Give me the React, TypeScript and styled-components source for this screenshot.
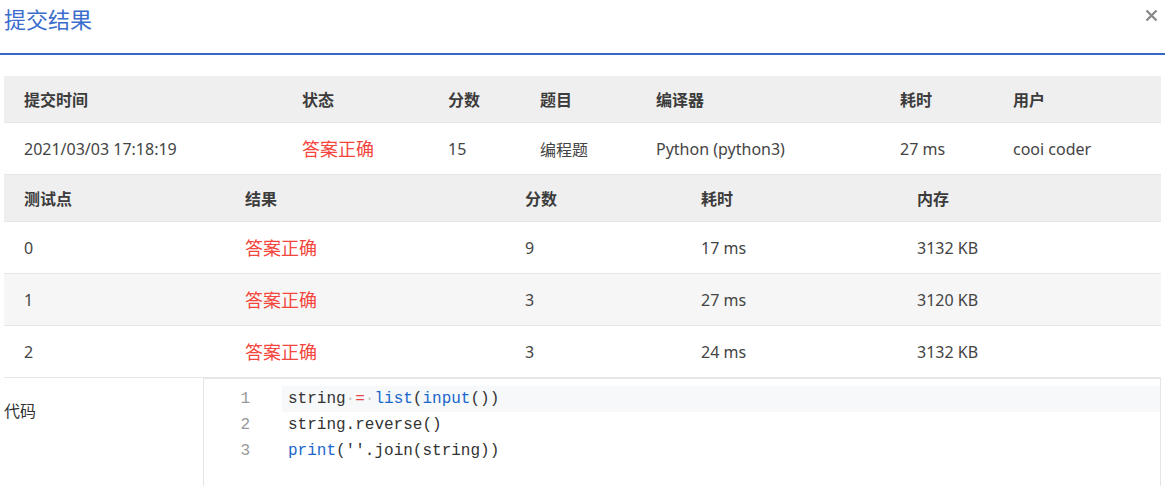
import React, { FC } from 'react'
import styled, { createGlobalStyle } from 'styled-components'

const GlobalStyle = createGlobalStyle`
  body {
    margin: 0;
    background: #fff;
    font-family: 'Segoe UI', 'Noto Sans', 'Noto Sans CJK SC', sans-serif;
    color: #333;
  }
`

const Modal = styled.div`
  width: 1165px;
  height: 486px;
  overflow: hidden;
`

const Header = styled.div`
  display: flex;
  justify-content: space-between;
  align-items: flex-start;
  height: 53px;
  padding: 0 7px 0 4px;
  border-bottom: 2px solid #3568c8;
  box-sizing: content-box;
`

const Title = styled.div`
  font-family: 'Noto Sans CJK SC', sans-serif;
  font-size: 22px;
  line-height: 36px;
  color: #3a6dcc;
`

const Close = styled.button`
  display: flex;
  margin-top: 9px;
  padding: 0;
  border: none;
  background: none;
  color: #8a8a8a;
  cursor: pointer;
`

const Body = styled.div`
  padding: 21px 4px 0;
`

const Row = styled.div<{ $cols: string; $head?: boolean; $shade?: boolean }>`
  display: grid;
  grid-template-columns: ${(p) => p.$cols};
  align-items: center;
  height: ${(p) => (p.$head ? 46 : 51)}px;
  border-bottom: 1px solid #e6e6e6;
  background: ${(p) => (p.$head ? '#efefef' : p.$shade ? '#f6f6f6' : '#fff')};
  font-family: ${(p) =>
    p.$head ? "'Noto Sans CJK SC', sans-serif" : "'Segoe UI', 'Noto Sans', 'Noto Sans CJK SC', sans-serif"};
  font-weight: ${(p) => (p.$head ? 700 : 400)};
  font-size: 16px;
  line-height: 20px;
  color: ${(p) => (p.$head ? '#3c3c3c' : '#444')};
`

const Cell = styled.div<{ $ok?: boolean; $cjk?: boolean }>`
  padding-left: 20px;
  white-space: nowrap;
  color: ${(p) => (p.$ok ? '#f4463c' : 'inherit')};
  font-family: ${(p) => (p.$ok || p.$cjk ? "'Noto Sans CJK SC', sans-serif" : 'inherit')};
  font-size: ${(p) => (p.$ok ? 18 : 16)}px;
  margin-top: ${(p) => (p.$ok ? -2 : 0)}px;
`

const CodeRow = styled.div`
  display: flex;
  height: 109px;
`

const CodeLabel = styled.div`
  width: 199px;
  padding-top: 20px;
  font-family: 'Noto Sans CJK SC', sans-serif;
  font-size: 16px;
  color: #333;
`

const Editor = styled.div`
  flex: 1;
  padding-top: 7px;
  border-left: 1px solid #e4e4e4;
  border-right: 1px solid #e4e4e4;
  border-top: 1px solid #e6e6e6;
  font-family: 'Liberation Mono', 'DejaVu Sans Mono', monospace;
  font-size: 16px;
`

const Line = styled.div`
  display: flex;
  height: 26px;
  line-height: 26px;
`

const Gutter = styled.div`
  width: 46px;
  padding-right: 32px;
  text-align: right;
  color: #999;
`

const Code = styled.div<{ $active?: boolean }>`
  flex: 1;
  padding-left: 6px;
  background: ${(p) => (p.$active ? '#f7f8fa' : 'transparent')};
  color: #333;
  white-space: pre;
`

const Fn = styled.span`
  color: #1a67cc;
`

const Op = styled.span`
  color: #e0474b;
`

const Dot = styled.span`
  color: #c8c8c8;
`

const topCols = '278px 146px 92px 116px 244px 113px 1fr'
const subCols = '221px 280px 176px 216px 1fr'

const tests = [
  { id: '0', score: '9', time: '17 ms', mem: '3132 KB' },
  { id: '1', score: '3', time: '27 ms', mem: '3120 KB' },
  { id: '2', score: '3', time: '24 ms', mem: '3132 KB' },
]

const App: FC = () => (
  <Modal>
    <GlobalStyle />
    <Header>
      <Title>提交结果</Title>
      <Close aria-label="close">
        <svg width="13" height="13" viewBox="0 0 13 13">
          <path d="M1.5 1.5 L11.5 11.5 M11.5 1.5 L1.5 11.5" stroke="currentColor" strokeWidth="2.4" />
        </svg>
      </Close>
    </Header>
    <Body>
      <Row $cols={topCols} $head>
        <Cell>提交时间</Cell>
        <Cell>状态</Cell>
        <Cell>分数</Cell>
        <Cell>题目</Cell>
        <Cell>编译器</Cell>
        <Cell>耗时</Cell>
        <Cell>用户</Cell>
      </Row>
      <Row $cols={topCols}>
        <Cell>2021/03/03 17:18:19</Cell>
        <Cell $ok>答案正确</Cell>
        <Cell>15</Cell>
        <Cell $cjk>编程题</Cell>
        <Cell>Python (python3)</Cell>
        <Cell>27 ms</Cell>
        <Cell>cooi coder</Cell>
      </Row>
      <Row $cols={subCols} $head>
        <Cell>测试点</Cell>
        <Cell>结果</Cell>
        <Cell>分数</Cell>
        <Cell>耗时</Cell>
        <Cell>内存</Cell>
      </Row>
      {tests.map((t, i) => (
        <Row key={t.id} $cols={subCols} $shade={i === 1}>
          <Cell>{t.id}</Cell>
          <Cell $ok>答案正确</Cell>
          <Cell>{t.score}</Cell>
          <Cell>{t.time}</Cell>
          <Cell>{t.mem}</Cell>
        </Row>
      ))}
      <CodeRow>
        <CodeLabel>代码</CodeLabel>
        <Editor>
          <Line>
            <Gutter>1</Gutter>
            <Code $active>
              string<Dot>·</Dot>
              <Op>=</Op>
              <Dot>·</Dot>
              <Fn>list</Fn>(<Fn>input</Fn>())
            </Code>
          </Line>
          <Line>
            <Gutter>2</Gutter>
            <Code>string.reverse()</Code>
          </Line>
          <Line>
            <Gutter>3</Gutter>
            <Code>
              <Fn>print</Fn>('&#39;.join(string))
            </Code>
          </Line>
        </Editor>
      </CodeRow>
    </Body>
  </Modal>
)

export default App
